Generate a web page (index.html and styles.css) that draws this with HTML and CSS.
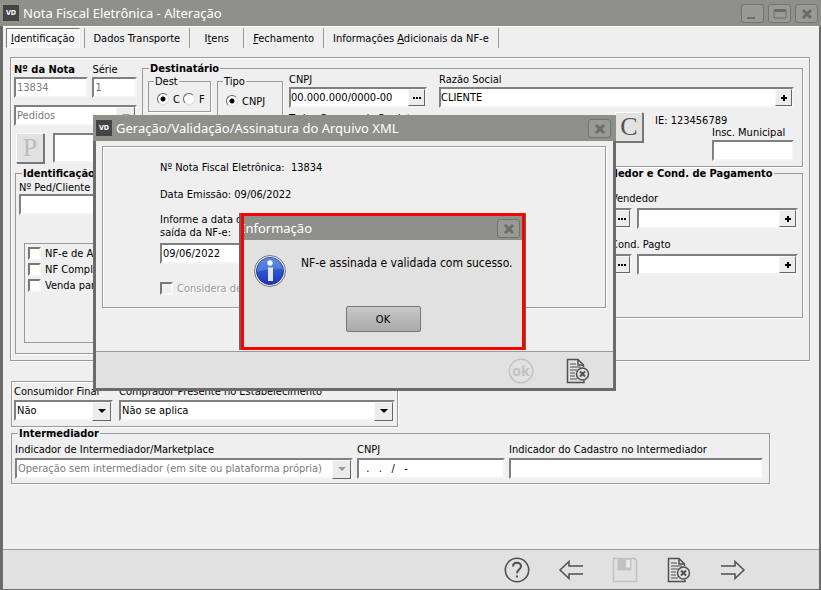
FILE: index.html
```
<!DOCTYPE html>
<html lang="pt-BR">
<head>
    <meta charset="UTF-8">
    <meta name="viewport" content="width=device-width, initial-scale=1.0">
    <title>Nota Fiscal Eletrônica - Alteração</title>
    <link rel="stylesheet" href="styles.css">
</head>
<body>
    <div class="window">
        <header class="titlebar">
            <span class="app-icon">VD</span>
            <h1>Nota Fiscal Eletrônica - Alteração</h1>
            <button type="button" class="win-btn" aria-label="Minimizar">
                <svg width="22" height="18" viewBox="0 0 22 18"><path d="M5 12h8v2H5z" fill="#6c6c66"/></svg>
            </button>
            <button type="button" class="win-btn" aria-label="Maximizar">
                <svg width="22" height="18" viewBox="0 0 22 18"><path d="M5 5h12v8H5z" fill="none" stroke="#6c6c66"/><path d="M5 4h12v3H5z" fill="#6c6c66"/></svg>
            </button>
            <button type="button" class="win-btn" aria-label="Fechar">
                <svg width="22" height="18" viewBox="0 0 22 18"><path d="M7 5l8 8M15 5l-8 8" fill="none" stroke="#6c6c66" stroke-width="3"/></svg>
            </button>
        </header>

        <nav class="tabs">
            <a href="#identificacao" class="tab active"><span><u>I</u>dentificação</span></a>
            <a href="#transporte" class="tab">Dados Transporte</a>
            <a href="#itens" class="tab">I<u>t</u>ens</a>
            <a href="#fechamento" class="tab"><u>F</u>echamento</a>
            <a href="#adicionais" class="tab">Informações <u>A</u>dicionais da NF-e</a>
        </nav>

        <main class="content" id="identificacao">
            <section class="panel">
                <div class="row top-row">
                    <div class="nota">
                        <div class="row">
                            <div class="field numero">
                                <label for="nota"><b>Nº da Nota</b></label>
                                <input type="text" id="nota" value="13834" disabled>
                            </div>
                            <div class="field serie">
                                <label for="serie">Série</label>
                                <input type="text" id="serie" value="1" disabled>
                            </div>
                        </div>
                        <div class="select">
                            <select id="origem" aria-label="Origem" disabled><option>Pedidos</option></select>
                        </div>
                        <div class="row pedido">
                            <button type="button" class="letter-btn" disabled>P</button>
                            <input type="text" aria-label="Pedido">
                        </div>
                    </div>

                    <fieldset class="destinatario">
                        <legend>Destinatário</legend>
                        <div class="row">
                            <fieldset class="options dest">
                                <legend>Dest</legend>
                                <label><input type="radio" name="dest" checked>C</label>
                                <label><input type="radio" name="dest">F</label>
                            </fieldset>
                            <fieldset class="options tipo">
                                <legend>Tipo</legend>
                                <label><input type="radio" name="tipo" checked>CNPJ</label>
                            </fieldset>
                            <div class="field cnpj">
                                <label for="cnpj">CNPJ</label>
                                <div class="lookup"><input type="text" id="cnpj" value="00.000.000/0000-00"><button type="button" class="dots" aria-label="Buscar CNPJ"></button></div>
                                <span class="produtor">Todos Campos do Produtor</span>
                            </div>
                            <div class="field razao">
                                <label for="razao">Razão Social</label>
                                <div class="lookup"><input type="text" id="razao" value="CLIENTE"><button type="button" class="plus" aria-label="Novo cliente"></button></div>
                                <div class="row inscricao">
                                    <button type="button" class="letter-btn">C</button>
                                    <span class="ie">IE: 123456789</span>
                                    <div class="field municipal">
                                        <label for="municipal">Insc. Municipal</label>
                                        <input type="text" id="municipal">
                                    </div>
                                </div>
                            </div>
                        </div>
                    </fieldset>
                </div>

                <div class="row bottom-row">
                    <fieldset class="identificacao">
                        <legend>Identificação</legend>
                        <div class="field">
                            <label for="ped">Nº Ped/Cliente</label>
                            <input type="text" id="ped">
                        </div>
                        <div class="checks">
                            <label><input type="checkbox">NF-e de Ajuste</label>
                            <label><input type="checkbox">NF Complementar</label>
                            <label><input type="checkbox">Venda para Entrega</label>
                        </div>
                    </fieldset>
                    <fieldset class="pagamento">
                        <legend>Vendedor e Cond. de Pagamento</legend>
                        <label for="vendedor">Vendedor</label>
                        <div class="row">
                            <div class="lookup code"><input type="text" id="vendedor"><button type="button" class="dots" aria-label="Buscar vendedor"></button></div>
                            <div class="lookup"><input type="text" aria-label="Nome do vendedor"><button type="button" class="plus" aria-label="Novo vendedor"></button></div>
                        </div>
                        <label for="cond">Cond. Pagto</label>
                        <div class="row">
                            <div class="lookup code"><input type="text" id="cond"><button type="button" class="dots" aria-label="Buscar condição"></button></div>
                            <div class="lookup"><input type="text" aria-label="Descrição da condição"><button type="button" class="plus" aria-label="Nova condição"></button></div>
                        </div>
                    </fieldset>
                </div>
            </section>

            <section class="box consumidor">
                <div class="field final">
                    <label for="final">Consumidor Final</label>
                    <div class="select"><select id="final"><option>Não</option><option>Sim</option></select></div>
                </div>
                <div class="field presente">
                    <label for="presente">Comprador Presente no Estabelecimento</label>
                    <div class="select"><select id="presente"><option>Não se aplica</option></select></div>
                </div>
            </section>

            <fieldset class="intermediador">
                <legend>Intermediador</legend>
                <div class="row">
                    <div class="field indicador">
                        <label for="indicador">Indicador de Intermediador/Marketplace</label>
                        <div class="select"><select id="indicador" disabled><option>Operação sem intermediador (em site ou plataforma própria)</option></select></div>
                    </div>
                    <div class="field cnpj-int">
                        <label for="cnpj-int">CNPJ</label>
                        <input type="text" id="cnpj-int" value="&nbsp;&nbsp;.&nbsp;&nbsp;&nbsp;.&nbsp;&nbsp;&nbsp;/&nbsp;&nbsp;&nbsp;-">
                    </div>
                    <div class="field cadastro">
                        <label for="cadastro">Indicador do Cadastro no Intermediador</label>
                        <input type="text" id="cadastro">
                    </div>
                </div>
            </fieldset>
        </main>

        <footer class="toolbar">
            <button type="button" aria-label="Ajuda">
                <svg width="26" height="26" viewBox="0 0 26 26" fill="none" stroke="#505050" stroke-width="1.6"><circle cx="13" cy="13" r="11.7"/><path d="M9 9.6C9 4.6 17 4.6 17 9.3c0 3.1-4 3.5-4 7" stroke-width="2"/><path d="M12 18.4h2v2.2h-2z" fill="#505050" stroke="none"/></svg>
            </button>
            <button type="button" aria-label="Anterior">
                <svg width="26" height="26" viewBox="0 0 26 26" fill="none" stroke="#505050" stroke-width="1.5"><path d="M25 9H11V4.5L2 13l9 8.5V17h14"/></svg>
            </button>
            <button type="button" aria-label="Salvar" disabled>
                <svg width="26" height="26" viewBox="0 0 26 26" fill="none" stroke="#c2c2c2" stroke-width="1.6"><path d="M2 1.5h20.5l2 2v21h-23V2z"/><path d="M5.5 2h14v11.5h-14z" fill="#c2c2c2" stroke="none"/><path d="M14 3h4v7.5h-4z" fill="#e8e8e8" stroke="none"/></svg>
            </button>
            <button type="button" aria-label="Cancelar">
                <svg width="26" height="26" viewBox="0 0 26 26" fill="none" stroke="#505050" stroke-width="1.5"><path d="M18.5 9V7L13 1.5H2.5v23H19v-2M13 1.5V7h5.5"/><path d="M5 6h6M5 9h11M5 12h7M5 15h5M5 18h5M5 21h7" stroke-width="1"/><circle cx="17.5" cy="16" r="6" fill="#e1e1e1"/><path d="M15 13.5l5 5M20 13.5l-5 5" stroke-width="2"/></svg>
            </button>
            <button type="button" aria-label="Próximo">
                <svg width="26" height="26" viewBox="0 0 26 26" fill="none" stroke="#505050" stroke-width="1.5"><path d="M1 9h14V4.5L24 13l-9 8.5V17H1"/></svg>
            </button>
        </footer>

        <div class="dialog xml" role="dialog" aria-labelledby="xml-title">
            <header class="titlebar">
                <span class="app-icon">VD</span>
                <h2 id="xml-title">Geração/Validação/Assinatura do Arquivo XML</h2>
                <button type="button" class="win-btn" aria-label="Fechar">
                    <svg width="22" height="18" viewBox="0 0 22 18"><path d="M7 5l8 8M15 5l-8 8" fill="none" stroke="#6c6c66" stroke-width="3"/></svg>
                </button>
            </header>
            <div class="dialog-body">
                <div class="box xml-box">
                    <p>Nº Nota Fiscal Eletrônica:&nbsp; 13834</p>
                    <p>Data Emissão: 09/06/2022</p>
                    <label for="saida">Informe a data de<br>saída da NF-e:</label>
                    <input type="text" id="saida" value="09/06/2022">
                    <label class="considera"><input type="checkbox" disabled>Considera desconto</label>
                </div>
            </div>
            <footer class="toolbar">
                <button type="button" aria-label="Confirmar" disabled>
                    <svg width="26" height="26" viewBox="0 0 26 26"><circle cx="13" cy="13" r="11.7" fill="none" stroke="#c2c2c2" stroke-width="1.5"/><text x="13" y="18" text-anchor="middle" class="ok-text">ok</text></svg>
                </button>
                <button type="button" aria-label="Cancelar">
                    <svg width="26" height="26" viewBox="0 0 26 26" fill="none" stroke="#505050" stroke-width="1.5"><path d="M18.5 9V7L13 1.5H2.5v23H19v-2M13 1.5V7h5.5"/><path d="M5 6h6M5 9h11M5 12h7M5 15h5M5 18h5M5 21h7" stroke-width="1"/><circle cx="17.5" cy="16" r="6" fill="#e1e1e1"/><path d="M15 13.5l5 5M20 13.5l-5 5" stroke-width="2"/></svg>
                </button>
            </footer>
        </div>

        <div class="dialog aviso" role="alertdialog" aria-labelledby="aviso-title">
            <header class="titlebar">
                <h2 id="aviso-title">Informação</h2>
                <button type="button" class="win-btn" aria-label="Fechar">
                    <svg width="22" height="18" viewBox="0 0 22 18"><path d="M7 5l8 8M15 5l-8 8" fill="none" stroke="#6c6c66" stroke-width="3"/></svg>
                </button>
            </header>
            <div class="aviso-body">
                <svg width="32" height="32" viewBox="0 0 32 32">
                    <defs>
                        <linearGradient id="blue" x1="0" y1="0" x2="0" y2="1"><stop offset="0" stop-color="#4a78d8"/><stop offset="1" stop-color="#1635c4"/></linearGradient>
                    </defs>
                    <circle cx="16" cy="16" r="15.5" fill="#e8e8e8" stroke="#777"/>
                    <circle cx="16" cy="16" r="13.5" fill="url(#blue)" stroke="#23399c"/>
                    <path d="M3 17a13 13 0 0 1 26-3q-14-1-26 3z" fill="#6d9be8" opacity=".5"/>
                    <circle cx="16" cy="8" r="2.7" fill="#fff"/>
                    <path d="M14 12.5h5v13.5h-5z" fill="#e6e6e6"/>
                </svg>
                <p>NF-e assinada e validada com sucesso.</p>
            </div>
            <button type="button" class="ok-btn">OK</button>
        </div>
    </div>
</body>
</html>
```
FILE: styles.css
```
* {
    box-sizing: border-box;
}
body {
    margin: 0;
    background-color: #efefef;
    font-family: "DejaVu Sans Condensed", "DejaVu Sans", sans-serif;
    font-size: 11px;
    font-stretch: condensed;
    line-height: 13px;
    color: #000;
}
input,
select,
button {
    font: inherit;
    margin: 0;
}
p {
    margin: 0;
}
.window {
    position: relative;
    display: flex;
    flex-direction: column;
    min-height: 100vh;
    border: solid #6b6b6b;
    border-width: 0 2px 1px 3px;
}

/* barra de título */
.titlebar {
    display: flex;
    align-items: center;
    gap: 4px;
    height: 26px;
    margin: 0 -2px 0 -3px;
    padding: 0 3px;
    background-color: #90908a;
    color: #fff;
}
.titlebar h1,
.titlebar h2 {
    flex: 1;
    margin: 0;
    font-family: "Noto Sans", sans-serif;
    font-size: 13px;
    font-weight: normal;
    font-stretch: normal;
    line-height: 18px;
    white-space: nowrap;
}
.app-icon {
    width: 16px;
    height: 16px;
    background-color: #444;
    font-size: 7px;
    font-weight: bold;
    line-height: 16px;
    text-align: center;
}
.win-btn {
    width: 23px;
    height: 19px;
    padding: 0;
    border: 1px solid #74746e;
    border-radius: 3px;
    background-color: #9a9a94;
}
.win-btn svg {
    display: block;
}

/* abas */
.tabs {
    display: flex;
    height: 31px;
    padding: 1px 3px 9px;
    border-top: 1px solid #fff;
}
.tab {
    min-width: 54px;
    padding: 4px 9px;
    border-right: 1px solid #999;
    color: #000;
    text-align: center;
    text-decoration: none;
    white-space: nowrap;
}
.tab.active {
    padding: 0 4px 0 0;
}
.tab.active span {
    display: block;
    height: 20px;
    padding: 3px 4px;
    border: 1px solid;
    border-color: #777 #fff #fff #777;
    background-color: #f8f8f8;
}

/* campos */
.row {
    display: flex;
}
.field label {
    display: block;
    white-space: nowrap;
}
input[type="text"],
.lookup,
.select {
    width: 100%;
    height: 21px;
    border: 2px solid;
    border-color: #808080 #f4f4f4 #f4f4f4 #808080;
    border-radius: 0;
    background-color: #fff;
}
input[type="text"] {
    padding: 0 1px;
    outline: none;
}
input:disabled,
select:disabled {
    color: #7a7a7a;
    opacity: 1;
}
.lookup {
    display: flex;
}
.lookup input[type="text"] {
    flex: 1;
    min-width: 0;
    height: 17px;
    padding: 0;
    border: none;
}
.lookup button {
    display: flex;
    align-items: center;
    justify-content: center;
    width: 17px;
    padding: 0;
    border: 1px solid;
    border-color: #f8f8f8 #666 #666 #f8f8f8;
    background-color: #ececec;
}
.dots::before {
    content: "";
    width: 8px;
    height: 2px;
    background: repeating-linear-gradient(90deg, #000 0 2px, transparent 2px 3px);
}
.plus::before {
    content: "";
    width: 6px;
    height: 6px;
    background: linear-gradient(#000, #000) center / 6px 2px no-repeat, linear-gradient(#000, #000) center / 2px 6px no-repeat;
}
.select {
    position: relative;
}
.select select {
    display: block;
    width: 100%;
    height: 17px;
    padding: 0 18px 0 1px;
    border: none;
    border-radius: 0;
    background: none;
    appearance: none;
    color: #000;
}
.select select:disabled {
    color: #7a7a7a;
}
.select::after {
    content: "";
    position: absolute;
    top: 0;
    right: 0;
    width: 17px;
    height: 17px;
    border: 1px solid;
    border-color: #f8f8f8 #666 #666 #f8f8f8;
    background-color: #ececec;
    pointer-events: none;
}
.select::before {
    content: "";
    position: absolute;
    z-index: 1;
    top: 7px;
    right: 5px;
    border: solid transparent;
    border-width: 4px 4px 0;
    border-top-color: #000;
    pointer-events: none;
}
.select:has(:disabled)::before {
    border-top-color: #999;
}
input[type="checkbox"] {
    appearance: none;
    width: 13px;
    height: 13px;
    border: 2px solid;
    border-color: #777 #f8f8f8 #f8f8f8 #777;
    background-color: #fff;
}
input[type="checkbox"]:disabled {
    background-color: #efefef;
}
input[type="radio"] {
    appearance: none;
    width: 12px;
    height: 12px;
    border: 1px solid;
    border-color: #666 #ddd #ddd #666;
    border-radius: 50%;
    background-color: #fff;
}
input[type="radio"]:checked {
    background-image: radial-gradient(circle, #000 2px, transparent 3px);
}
.letter-btn {
    width: 28px;
    height: 30px;
    padding: 0;
    border: 1px solid;
    border-color: #fff #777 #777 #fff;
    background-color: #e2e2e2;
    box-shadow: 1px 1px 0 #777;
    color: #555;
    font-family: "Liberation Serif", serif;
    font-size: 26px;
    line-height: 24px;
}
.letter-btn:disabled {
    color: #bbb;
}

/* grupos */
fieldset,
.box,
.panel {
    min-width: 0;
    margin: 0;
    border: 1px solid #999;
    box-shadow: 1px 1px 0 #fff, inset 1px 1px 0 #fff;
}
fieldset {
    padding: 0;
    box-shadow: 1px 1px 0 #fff;
}
legend {
    margin-left: 6px;
    padding: 0 1px;
    font-weight: bold;
    white-space: nowrap;
}
.content {
    flex: 1;
    padding: 0 9px 0 7px;
}
.panel {
    height: 304px;
    padding: 4px 6px 6px 3px;
}
.top-row {
    justify-content: space-between;
}
.nota {
    width: 123px;
    padding-top: 1px;
}
.nota .row {
    gap: 4px;
}
.nota .field label {
    margin-bottom: 1px;
}
.numero {
    width: 75px;
}
.serie {
    width: 45px;
}
.nota .select {
    margin-top: 7px;
}
.nota .pedido {
    gap: 9px;
    margin-top: 7px;
    padding-left: 2px;
}
.pedido input[type="text"] {
    width: 84px;
    height: 30px;
}
.destinatario {
    flex: 1;
    height: 105px;
    margin-left: 5px;
}
.destinatario > .row {
    gap: 6px;
    margin-top: -2px;
    padding: 0 8px 0 5px;
}
.options {
    height: 37px;
    margin-top: 2px;
    padding: 2px 0 0 8px;
}
.options legend {
    margin-left: -3px;
    font-weight: normal;
}
.options label {
    display: inline-flex;
    align-items: center;
    gap: 4px;
    height: 18px;
}
.dest {
    width: 63px;
}
.tipo {
    width: 66px;
    height: 60px;
    padding-top: 4px;
}
.cnpj {
    width: 138px;
    margin-right: 6px;
}
.destinatario .field > label {
    height: 14px;
}
.produtor {
    display: block;
    margin-top: 4px;
    white-space: nowrap;
}
.razao {
    flex: 1;
    min-width: 0;
}
.inscricao {
    justify-content: flex-end;
    margin-top: 4px;
}
.ie {
    width: 57px;
    padding-top: 2px;
    margin-left: 12px;
    white-space: nowrap;
}
.municipal {
    width: 82px;
    padding-top: 14px;
}
.bottom-row {
    justify-content: space-between;
    padding-left: 1px;
}
.identificacao {
    width: 400px;
    height: 187px;
    padding: 1px 8px 0 3px;
}
.identificacao legend,
.intermediador legend {
    margin-left: 3px;
}
.identificacao input[type="text"] {
    width: 200px;
}
.checks {
    height: 100px;
    margin: 28px 0 0 5px;
    padding: 1px 3px;
    border: 1px solid #999;
}
.checks label,
.considera {
    display: flex;
    align-items: center;
    gap: 4px;
    height: 16px;
}
.pagamento {
    width: 216px;
    height: 151px;
    padding: 12px 4px 0 23px;
}
.pagamento legend {
    margin-left: -22px;
}
.pagamento .row {
    gap: 5px;
    margin: 3px 0 9px;
}
.pagamento .code {
    width: 70px;
    flex-shrink: 0;
    margin-left: -49px;
}
.consumidor {
    display: flex;
    gap: 6px;
    width: 387px;
    margin: 20px 0 0 1px;
    padding: 3px 2px 5px;
}
.consumidor label,
.intermediador label {
    margin-bottom: 2px;
}
.final {
    width: 99px;
}
.presente {
    flex: 1;
}
.intermediador {
    max-width: 759px;
    margin-left: 1px;
    padding: 3px 6px 4px 3px;
}
.intermediador .row {
    gap: 4px;
}
.indicador {
    width: 338px;
}
.cnpj-int {
    width: 148px;
}
.cadastro {
    flex: 1;
}

/* barra inferior */
.toolbar {
    display: flex;
    justify-content: flex-end;
    gap: 28px;
    height: 40px;
    padding: 7px 73px 6px;
    border-top: 1px solid #999;
    background-color: #e1e1e1;
}
.toolbar button {
    width: 26px;
    height: 26px;
    padding: 0;
    border: none;
    background: none;
}
.toolbar svg {
    display: block;
}
.ok-text {
    fill: #c2c2c2;
    font-family: "Open Sans", sans-serif;
    font-size: 14px;
    font-stretch: normal;
    font-weight: bold;
}

/* janelas */
.dialog {
    position: absolute;
    background-color: #efefef;
}
.xml {
    top: 115px;
    left: 90px;
    width: 523px;
    border: solid #6b6b6b;
    border-width: 0 3px 3px;
}
.xml .titlebar {
    margin: 0 -3px;
    padding-right: 5px;
}
.dialog-body {
    padding: 5px 7px 43px 6px;
}
.xml-box {
    height: 162px;
    padding: 14px 57px;
}
.xml-box p {
    margin-bottom: 14px;
}
.xml-box label {
    display: block;
    line-height: 13px;
}
.xml-box p + label {
    margin-top: -2px;
}
.xml-box input[type="text"] {
    width: 100px;
    margin-top: 4px;
}
.xml-box .considera {
    display: flex;
    margin-top: 16px;
    color: #999;
    text-shadow: 1px 1px 0 #fff;
}
.xml .toolbar {
    gap: 31px;
    height: 37px;
    padding: 6px 22px 5px;
}
.aviso {
    top: 213px;
    left: 238px;
    width: 284px;
    height: 137px;
    border: 3px solid #f00;
    background-color: #e1e1e1;
    box-shadow: -2px 0 0 #666, 1px 0 0 #666;
}
.aviso .titlebar {
    height: 24px;
    margin: 0;
    padding: 0 2px 0 0;
}
.aviso h2 {
    text-indent: -3px;
    overflow: hidden;
}
.aviso-body {
    display: flex;
    gap: 15px;
    padding: 15px 10px 19px;
}
.aviso-body svg {
    flex-shrink: 0;
}
.aviso-body p {
    padding-top: 2px;
    font-size: 12px;
    white-space: nowrap;
}
.ok-btn {
    display: block;
    width: 75px;
    height: 26px;
    margin: 0 auto;
    border: 1px solid #777;
    border-radius: 2px;
    background: linear-gradient(#c8c8c8, #aaa);
}
```
